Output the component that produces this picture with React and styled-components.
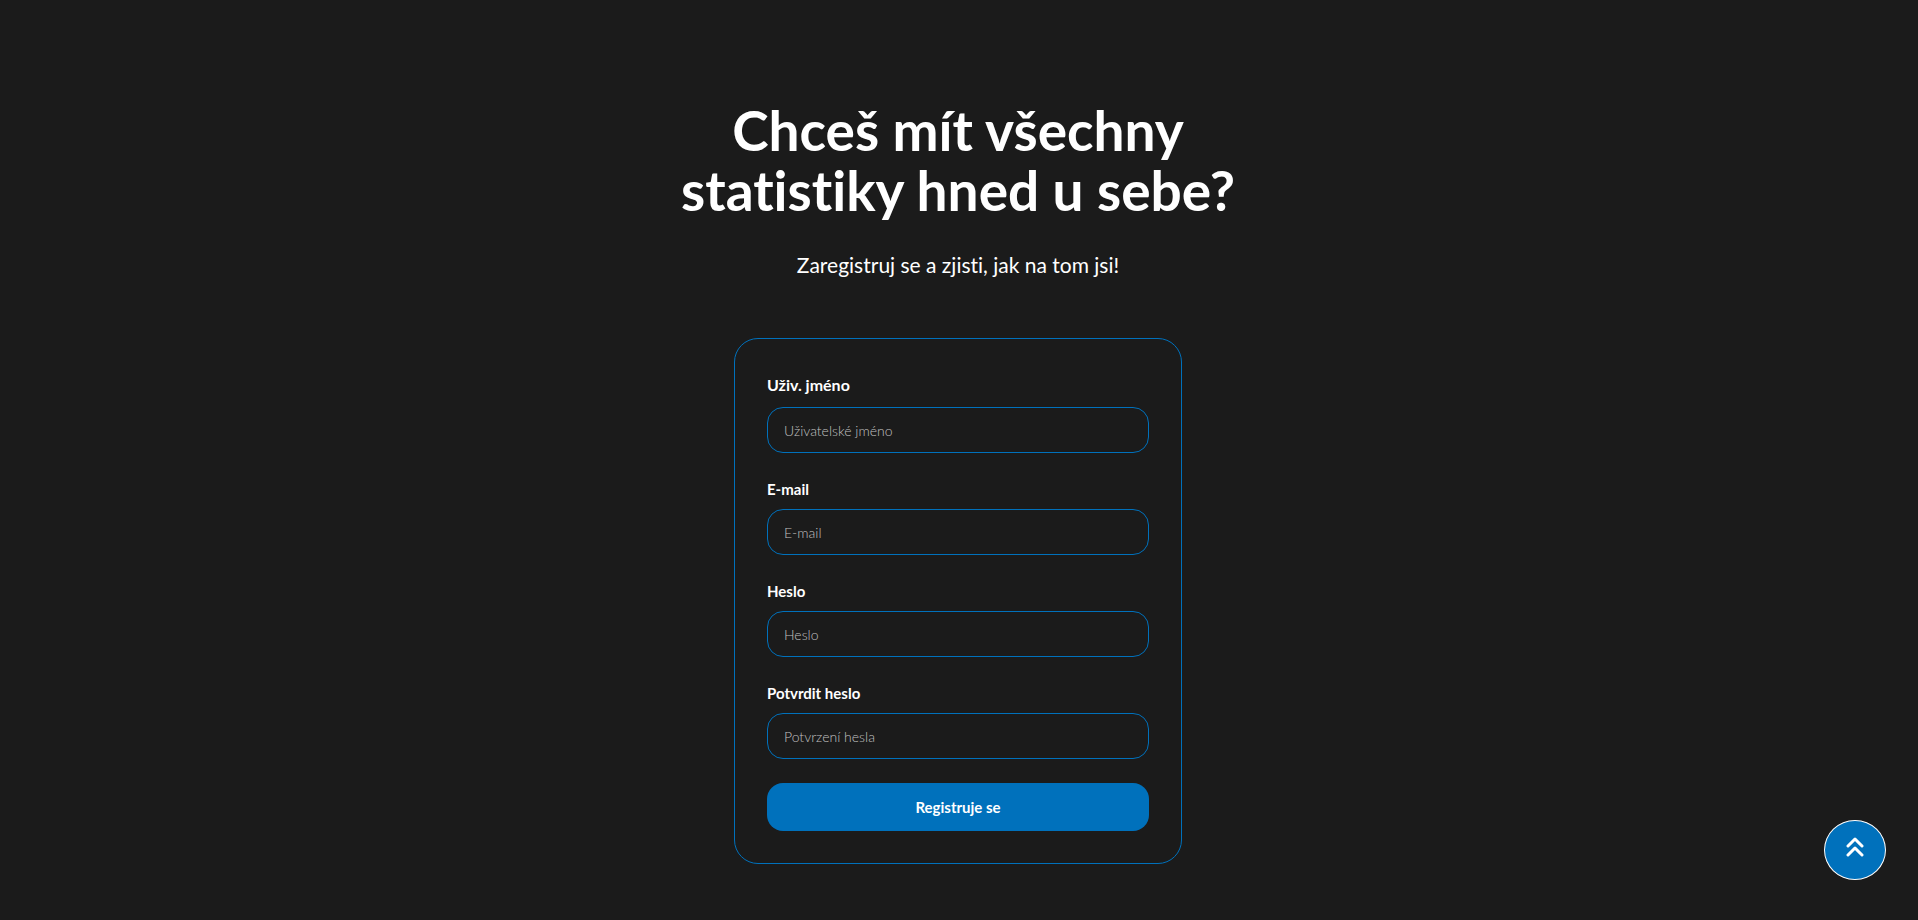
import React from "react";
import styled, { createGlobalStyle } from "styled-components";

const Global = createGlobalStyle`
  * { box-sizing: border-box; }
  body {
    margin: 0;
    background: #1b1b1b;
    color: #fff;
    font-family: Lato, "Liberation Sans", sans-serif;
    font-variant-ligatures: none;
  }
`;

const Page = styled.main`
  display: flex;
  flex-direction: column;
  align-items: center;
  min-height: 100vh;
  padding: 100px 18px 56px 16px;
`;

const Title = styled.h1`
  margin: 0;
  max-width: 672px;
  font-size: 55px;
  line-height: 60px;
  font-weight: 700;
  text-align: center;
`;

const Subtitle = styled.p`
  margin: 28px 0 56px;
  font-size: 21px;
  line-height: 34px;
  text-align: center;
`;

const Form = styled.form`
  display: flex;
  flex-direction: column;
  gap: 24px;
  width: 100%;
  max-width: 448px;
  padding: 32px;
  border: 1px solid #0071bc;
  border-radius: 24px;
`;

const Field = styled.div`
  display: flex;
  flex-direction: column;
  gap: 8px;
`;

const Label = styled.label`
  font-size: ${(p) => (p.$large ? 16 : 15)}px;
  line-height: ${(p) => (p.$large ? 28 : 24)}px;
  font-weight: 700;
`;

const Input = styled.input`
  width: 100%;
  height: 46px;
  padding: 0 16px;
  border: 1px solid #0071bc;
  border-radius: 16px;
  background: transparent;
  color: #fff;
  font-family: inherit;
  font-size: 14px;
  font-weight: 300;
  &::placeholder { color: #c0c0c0; opacity: 1; }
`;

const Submit = styled.button`
  height: 48px;
  padding: 0;
  border: 0;
  border-radius: 16px;
  background: #0071bc;
  color: #fff;
  font-family: inherit;
  font-size: 15px;
  font-weight: 700;
  cursor: pointer;
`;

const ToTop = styled.button`
  position: fixed;
  right: 32px;
  bottom: 40px;
  display: flex;
  align-items: center;
  justify-content: center;
  width: 62px;
  height: 60px;
  padding: 0 0 6px;
  border: 1px solid #fff;
  border-radius: 50%;
  background: #0071bc;
  color: #fff;
  cursor: pointer;
`;

const fields = [
  { id: "username", label: "Uživ. jméno", placeholder: "Uživatelské jméno", type: "text", large: true },
  { id: "email", label: "E-mail", placeholder: "E-mail", type: "email" },
  { id: "password", label: "Heslo", placeholder: "Heslo", type: "password" },
  { id: "confirm", label: "Potvrdit heslo", placeholder: "Potvrzení hesla", type: "password" },
];

export default function App() {
  return (
    <>
      <Global />
      <Page>
        <Title>
          Chceš mít všechny
          <br />
          statistiky hned u sebe?
        </Title>
        <Subtitle>Zaregistruj se a zjisti, jak na tom jsi!</Subtitle>
        <Form onSubmit={(e) => e.preventDefault()}>
          {fields.map((f) => (
            <Field key={f.id}>
              <Label htmlFor={f.id} $large={f.large}>{f.label}</Label>
              <Input id={f.id} type={f.type} placeholder={f.placeholder} />
            </Field>
          ))}
          <Submit type="submit">Registruje se</Submit>
        </Form>
      </Page>
      <ToTop type="button" aria-label="Nahoru" onClick={() => window.scrollTo({ top: 0, behavior: "smooth" })}>
        <svg width="18" height="20" viewBox="0 0 18 20" fill="none" stroke="currentColor" strokeWidth="3" strokeLinecap="round" strokeLinejoin="round">
          <path d="M2 9 9 2l7 7M2 18l7-7 7 7" />
        </svg>
      </ToTop>
    </>
  );
}
